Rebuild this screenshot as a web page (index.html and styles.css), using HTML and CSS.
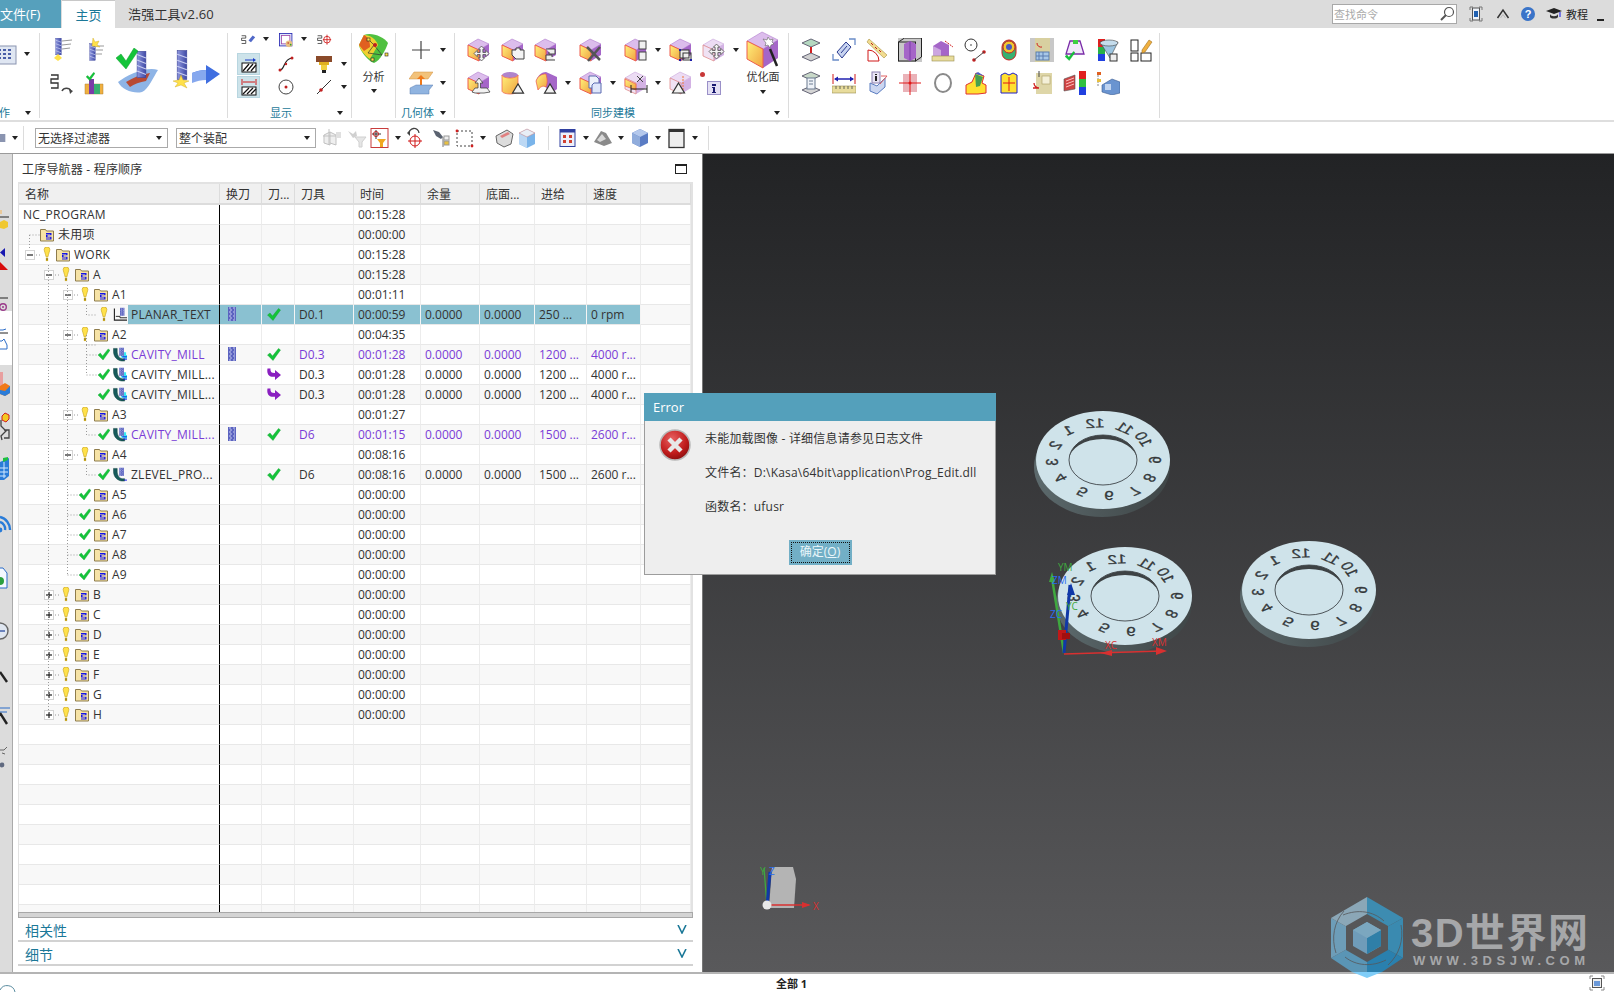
FILE: index.html
```html
<!DOCTYPE html>
<html lang="zh-CN">
<head>
<meta charset="utf-8">
<title>工序导航器</title>
<link rel="stylesheet" href="styles.css">
</head>
<body>
<svg class="defs" aria-hidden="true">
  <defs>
    <linearGradient id="gy" x1="0" y1="0" x2="1" y2="1"><stop offset="0" stop-color="#fff27a"/><stop offset="1" stop-color="#f0a040"/></linearGradient>
    <linearGradient id="gside" x1="0" y1="0" x2="1" y2="0"><stop offset="0" stop-color="#5c6a6d"/><stop offset=".5" stop-color="#4c5658"/><stop offset="1" stop-color="#3f4647"/></linearGradient>
    <linearGradient id="gmill" x1="0" y1="0" x2="1" y2="0"><stop offset="0" stop-color="#8d96dd"/><stop offset="1" stop-color="#3f4aa6"/></linearGradient>
    <linearGradient id="gview" x1="0" y1="0" x2="0" y2="1"><stop offset="0" stop-color="#222325"/><stop offset="1" stop-color="#59595b"/></linearGradient>
    <radialGradient id="gerr" cx=".4" cy=".3" r=".8"><stop offset="0" stop-color="#e86060"/><stop offset=".6" stop-color="#c01c1c"/><stop offset="1" stop-color="#7a0b0b"/></radialGradient>

    <symbol id="cube" viewBox="0 0 24 24">
      <path d="M1 7 11 1l11 5-10 6z" fill="#dcbdec" stroke="#b07ccc" stroke-width=".6"/>
      <path d="M12 12 22 6v11l-10 6z" fill="#a566c8"/>
      <path d="M1 7l11 5v11L1 18z" fill="url(#gy)" stroke="#ee5c4c" stroke-width="1"/>
    </symbol>
    <symbol id="cubel" viewBox="0 0 24 24">
      <path d="M1 7 11 1l11 5-10 6z" fill="#ecdcf4" stroke="#c9a6dc" stroke-width=".6"/>
      <path d="M12 12 22 6v11l-10 6z" fill="#d3b2e4"/>
      <path d="M1 7l11 5v11L1 18z" fill="#f0e2f4" stroke="#e08c8c" stroke-width=".8"/>
    </symbol>
    <symbol id="mv" viewBox="0 0 16 16">
      <path d="M8 1l3 3H9.300v3H12V5l3 3-3 3V9H9.300v3H11l-3 3-3-3h1.700V9H4v2L1 8l3-3v2h2.700V4H5z" fill="#f4f4f4" stroke="#555" stroke-width=".8"/>
    </symbol>
    <symbol id="tri" viewBox="0 0 14 14">
      <path d="M7 2l6 10H1z" fill="#f2f2f2" stroke="#333" stroke-width="1.200"/>
    </symbol>
    <symbol id="mill" viewBox="0 0 10 24">
      <rect x="1" y="0" width="8" height="24" fill="url(#gmill)" stroke="#3a4296" stroke-width=".5"/>
      <path d="M1 3l8 3M1 8l8 3M1 13l8 3M1 18l8 3" stroke="#c9cef2" stroke-width="1"/>
    </symbol>
    <symbol id="tool" viewBox="0 0 8 14">
      <rect width="8" height="14" fill="#5b63c0"/>
      <path d="M1 1h2M5 1h2M2 3h2M6 3h1M1 5h2M5 5h2M2 7h2M6 7h1M1 9h2M5 9h2M2 11h2M6 11h1M1 13h2M5 13h2" stroke="#c7ccf0" stroke-width="1"/>
    </symbol>
    <symbol id="chk" viewBox="0 0 13 13">
      <path d="M0 7l2.500-2 2.500 3 6-7.500L13 2 5.500 12.500z" fill="#14c43a" stroke="#0e9c2c" stroke-width=".4"/>
    </symbol>
    <symbol id="bulb" viewBox="0 0 8 16">
      <path d="M1 2.500a3 2.500 0 0 1 6 0c0 2-1.500 5-2 8H3c-.5-3-2-6-2-8z" fill="#ffe14a" stroke="#c9a51c" stroke-width=".7"/>
      <rect x="2.800" y="11.500" width="2.400" height="3.500" fill="#c9a92a"/>
      <path d="M3 13h2" stroke="#8e7a1c"/>
    </symbol>
    <symbol id="fold" viewBox="0 0 14 14">
      <path d="M.5 13.500V2h5l1 1.500h7v10z" fill="#f6e3a6" stroke="#8e7c4c"/>
      <path d="M6 5.500h5.500v2.200H7.500v1.500h4V12H6v-1h4.200V10H6V7h4.200V6.500H6z" fill="#1414e8"/>
    </symbol>
    <symbol id="opp" viewBox="0 0 15 15">
      <path d="M1.500 1v12.500H15" fill="none" stroke="#222" stroke-width="1.200"/>
      <path d="M3 9.500h4.500V11H15" fill="none" stroke="#222"/>
      <use href="#tool" x="7.500" y="0" width="5" height="9"/>
    </symbol>
    <symbol id="opc" viewBox="0 0 15 15">
      <path d="M8 5h6v3h1v4h-3v-1H9z" fill="#36e8f2"/>
      <path d="M.5 1v3c0 6 4 10 9 10.500h3v-2.500H10C6.500 11.500 4.500 8 4.500 4V1z" fill="#165a5a" stroke="#0e3c3c" stroke-width=".5"/>
      <path d="M10 10h5M11 12.500h4" stroke="#1414e8"/>
      <use href="#tool" x="6.500" y="0" width="5.500" height="9"/>
    </symbol>
    <symbol id="opz" viewBox="0 0 15 15">
      <path d="M.5 1v3c0 6 4 10 9 10.500h3v-2.500H10C6.500 11.500 4.500 8 4.500 4V1z" fill="#165a5a" stroke="#0e3c3c" stroke-width=".5"/>
      <path d="M12 13.500h3" stroke="#1414e8"/>
      <use href="#tool" x="6.500" y="0" width="5.500" height="9"/>
    </symbol>
    <symbol id="swap" viewBox="0 0 14 12">
      <path d="M.5 0h3c-.3 3 .7 4.500 4 4.500h.5V1.500L14 6.500 8 11.500V8.300H6C2 8.300-.5 5.500.5 0z" fill="#8a1fc0"/>
    </symbol>
    <symbol id="ss" viewBox="0 0 14 18">
      <path d="M1 1h7v4H1v4h7v5H1" fill="none" stroke="#333" stroke-width="1.300"/>
    </symbol>
    <symbol id="disk" viewBox="-72 -54 144 118" overflow="visible">
      <ellipse cx="-1" cy="7" rx="68" ry="50" fill="url(#gside)"/>
      <ellipse cx="0" cy="0" rx="67" ry="49" fill="#cfe3ea"/>
      <ellipse cx="0" cy="0" rx="34" ry="25" fill="#cfe3ea" stroke="#2c3033" stroke-width=".8"/>
      <path d="M-34 0a34 25 0 0 1 68 0a34 21 0 0 0-68 0z" fill="#3d4244"/>
      <g class="num">
        <text transform="translate(-8 -37) scale(1 .75) rotate(-3) scale(-1 1)">12</text>
        <text transform="translate(-35 -30) scale(1 .75) rotate(-30) scale(-1 1)">1</text>
        <text transform="translate(-48 -15) scale(1 .75) rotate(-60) scale(-1 1)">2</text>
        <text transform="translate(-51 2) scale(1 .75) rotate(-90) scale(-1 1)">3</text>
        <text transform="translate(-43 18) scale(1 .75) rotate(-120) scale(-1 1)">4</text>
        <text transform="translate(-21 32) scale(1 .75) rotate(-150) scale(-1 1)">5</text>
        <text transform="translate(6 36) scale(1 .75) rotate(180) scale(-1 1)">6</text>
        <text transform="translate(32 31) scale(1 .75) rotate(150) scale(-1 1)">7</text>
        <text transform="translate(47 18) scale(1 .75) rotate(120) scale(-1 1)">8</text>
        <text transform="translate(52 0) scale(1 .75) rotate(90) scale(-1 1)">9</text>
        <text transform="translate(41 -21) scale(1 .75) rotate(60) scale(-1 1)">10</text>
        <text transform="translate(22 -32) scale(1 .75) rotate(30) scale(-1 1)">11</text>
      </g>
    </symbol>
  </defs>
</svg>

<div class="app">
  <header class="titlebar">
    <div class="tab-file">文件(F)</div>
    <div class="tab-home">主页</div>
    <div class="tab-tool">浩强工具v2.60</div>
    <div class="title-right">
      <div class="search"><span>查找命令</span>
        <svg class="i16" viewBox="0 0 16 16"><circle cx="10" cy="6" r="4.500" fill="#fff" stroke="#555" stroke-width="1.200"/><path d="M7 9l-5 5" stroke="#555" stroke-width="2"/></svg>
      </div>
      <svg class="i16 ml-a" viewBox="0 0 16 16"><path d="M2 4V1h3M11 1h3v3M14 12v3h-3M5 15H2v-3" fill="none" stroke="#777"/><rect x="4.500" y="2" width="7" height="12" fill="#eef2f8" stroke="#555"/><rect x="6" y="5" width="4" height="6" fill="#1f5fb0"/></svg>
      <svg class="i16 ml-b" viewBox="0 0 16 16"><path d="M2.500 12 8 4l5.500 8" fill="none" stroke="#333" stroke-width="1.500"/><path d="M5.500 12 8 8.500l2.500 3.500" fill="none" stroke="#bbb"/></svg>
      <svg class="i16 ml-c" viewBox="0 0 16 16"><circle cx="8" cy="8" r="7" fill="#3a74c8"/><text x="8" y="12" class="help">?</text></svg>
      <svg class="i16 ml-d" viewBox="0 0 16 16"><path d="M0 5l8-3 8 3-8 3z" fill="#222"/><path d="M4 8c1 3 7 3 8 0v3c-1 2-7 2-8 0z" fill="#333"/><path d="M14 6v5" stroke="#1414e8"/></svg>
      <span class="tut">教程</span>
      <span class="minus"></span>
    </div>
  </header>

  <section class="ribbon">
    <div class="grp g0">
      <div class="g-body g0-body">
        <svg class="i24 cut" viewBox="0 0 24 24"><rect x="0" y="4" width="22" height="18" fill="#dfe6f2" stroke="#8a94b0"/><path d="M4 8h14M4 12h14M4 16h14" stroke="#4a5fa8" stroke-width="2" stroke-dasharray="3 2"/></svg>
        <i class="caret"></i>
      </div>
      <div class="g-foot"><span class="flabel g0-l">作</span><i class="caret"></i></div>
    </div>

    <div class="grp g1">
      <div class="g1-body">
        <svg class="i24" viewBox="0 0 24 24"><use href="#mill" x="6" y="0" width="7" height="17"/><path d="M13 3l10-1M13 7l9-1M13 11l8-1" stroke="#999"/><path d="M5 20l4-4 4 4-4 3z" fill="#ffe14a"/></svg>
        <svg class="i24" viewBox="0 0 24 24"><use href="#mill" x="8" y="5" width="7" height="18"/><path d="M15 8h8M15 12h7M15 16h6" stroke="#999"/><path d="M12 0l2 4 4-1-2 4 3 2-8-1z" fill="#ffe14a" stroke="#c9a51c" stroke-width=".4"/></svg>
        <svg class="big1" viewBox="0 0 44 46"><path d="M2 34c10-8 30-16 40-12-4 6-10 20-16 22C18 46 6 42 2 34z" fill="#8eb4e6"/><path d="M10 34c8-5 16-8 24-9l-4 8c-6 1-12 3-16 6z" fill="#b84a34"/><use href="#mill" x="20" y="3" width="11" height="27"/><path d="M0 10l5-4 5 7L18 0l4 3-12 18z" fill="#14c43a" stroke="#0e9c2c" stroke-width=".5"/></svg>
        <svg class="big2" viewBox="0 0 48 44"><use href="#mill" x="4" y="0" width="12" height="32"/><path d="M3 38l3-4-5-2 6-1 2-5 2 5 6 1-5 2 3 5-6-3z" fill="#ffe14a" stroke="#c9a51c" stroke-width=".4"/><path d="M20 24c5-2 9-3 14-3v-5l14 9-14 10v-5c-5 0-9 1-14 3z" fill="#3f6ee0"/><path d="M20 24c5-2 9-3 14-3v10c-5 0-9 1-14 3z" fill="#86a8ee"/></svg>
        <svg class="i24" viewBox="0 0 24 24"><use href="#ss" x="1" y="2" width="14" height="20"/><path d="M13 20a5 5 0 0 1 9 0" fill="none" stroke="#444" stroke-width="1.500"/><path d="M20 18l4 2-3 3z" fill="#444"/></svg>
        <svg class="i24" viewBox="0 0 24 24"><path d="M4 13h18v10H4z" fill="#f0b040" stroke="#b08030" stroke-width=".5"/><path d="M8 8h5v15H8z" fill="#7a3ca8"/><path d="M13 13h6v10h-6z" fill="#38b070"/><use href="#chk" x="5" y="1" width="9" height="9"/></svg>
      </div>
    </div>

    <div class="grp g2">
      <div class="g2-body">
        <svg class="i15" viewBox="0 0 18 18"><use href="#ss" x="0" y="2" width="10" height="14"/><path d="M9 9l5-6 3 2-5 6z" fill="#5068c8"/></svg><i class="caret"></i>
        <svg class="i15" viewBox="0 0 18 18"><rect x=".5" y=".5" width="15" height="15" fill="#dfe6fa" stroke="#2424b0"/><rect x="3" y="3" width="10" height="10" fill="#fff" stroke="#a04ca8"/><circle cx="12" cy="13" r="4" fill="#e8c080"/><circle cx="11" cy="12" r="1" fill="#c03030"/><circle cx="14" cy="14" r="1" fill="#30a030"/></svg><i class="caret"></i>
        <svg class="i15" viewBox="0 0 18 18"><use href="#ss" x="0" y="2" width="10" height="14"/><circle cx="12" cy="8" r="4" fill="none" stroke="#d01818"/><path d="M12 2v12M7 8h10" stroke="#d01818"/></svg><span></span>
        <div class="hl"><svg class="i18" viewBox="0 0 18 18"><rect x="2" y="8" width="14" height="9" fill="#fff" stroke="#111"/><path d="M3 16l6-7M7 16l6-7M11 16l5-6" stroke="#111" stroke-width="1.300"/><path d="M5 5h8" stroke="#1c3cc8"/><path d="M13 3l3 2-3 2z" fill="#1c3cc8"/></svg></div><span></span>
        <svg class="i18" viewBox="0 0 18 18"><path d="M3 15C8 15 6 4 15 3" fill="none" stroke="#222" stroke-width="1.200"/><circle cx="3" cy="15" r="1.500" fill="#c02020"/><circle cx="15" cy="3" r="1.500" fill="#c02020"/><circle cx="9" cy="9" r="1.200" fill="#c02020"/></svg><span></span>
        <svg class="i18" viewBox="0 0 18 18"><path d="M1 1h16v6H1z" fill="#8a4a2a"/><path d="M4 7h10v3H4z" fill="#e0b020"/><path d="M6 10h6v5H6z" fill="#f0d040"/><path d="M7 15h4v3H7z" fill="#222"/></svg><i class="caret"></i>
        <div class="hl"><svg class="i18" viewBox="0 0 18 18"><rect x="2" y="9" width="14" height="8" fill="#fff" stroke="#111"/><path d="M3 16l6-6M7 16l6-6M11 16l5-5" stroke="#111" stroke-width="1.300"/><path d="M2 1v6M16 1v6M3 4h12" stroke="#d01818"/></svg></div><span></span>
        <svg class="i18" viewBox="0 0 18 18"><circle cx="9" cy="9" r="7" fill="#fff" stroke="#444"/><circle cx="9" cy="9" r="1.500" fill="#c02020"/></svg><span></span>
        <svg class="i18" viewBox="0 0 18 18"><path d="M2 16 16 2" stroke="#333"/><circle cx="6" cy="12" r="1.800" fill="#c02020"/></svg><i class="caret"></i>
      </div>
      <div class="g-foot g2-foot"><span class="flabel">显示</span><i class="caret"></i></div>
    </div>

    <div class="grp g3">
      <svg class="big3" viewBox="0 0 32 30"><path d="M6 2c8-3 20 2 24 8-2 6-8 18-14 20C10 28 2 18 1 12z" fill="#50c040"/><path d="M6 2c6 0 12 4 14 10l-8 14c-6-4-10-10-11-14z" fill="#f0d030"/><path d="M6 2c4 2 6 6 6 12l-6 4-5-6z" fill="#e06020"/><path d="M10 6l6 6 8 10M16 12l-6 8 14 2" fill="none" stroke="#333" stroke-width=".7"/><rect x="9" y="5" width="3" height="3" fill="#ffe14a" stroke="#222" stroke-width=".6"/><rect x="27" y="20" width="3" height="3" fill="#ffe14a" stroke="#222" stroke-width=".6"/><rect x="13" y="25" width="3" height="3" fill="#ffe14a" stroke="#222" stroke-width=".6"/><circle cx="17" cy="12" r="2" fill="#c02020"/></svg>
      <span class="blabel">分析</span>
      <i class="caret"></i>
    </div>

    <div class="grp g4">
      <div class="g4-body">
        <svg class="i24" viewBox="0 0 24 24"><path d="M12 3v18M3 12h18" stroke="#444" stroke-width="1.200"/></svg><i class="caret"></i>
        <svg class="i24" viewBox="0 0 24 24"><path d="M5 1h19l-5 7H0z" fill="#f2c27a" stroke="#d09040" stroke-width=".5"/><path d="M11 17V8H8l4-4 4 4h-3v9z" fill="#f07818"/><path d="M1 17l6-3h17l-4 5v4H1z" fill="#90b4e0" stroke="#5a7cb0" stroke-width=".5"/></svg><i class="caret"></i>
      </div>
      <div class="g-foot"><span class="flabel">几何体</span><i class="caret"></i></div>
    </div>

    <div class="grp g5">
      <div class="g5-body">
        <svg class="i24" viewBox="0 0 24 24"><use href="#cube"/><use href="#mv" x="6" y="7" width="17" height="17"/></svg>
        <svg class="i24" viewBox="0 0 24 24"><use href="#cube"/><path d="M11 12h4v-2h4v2h4v9h-8l-4-4z" fill="#f4f4f4" stroke="#444"/></svg>
        <svg class="i24" viewBox="0 0 24 24"><use href="#cube"/><path d="M12 11h9v5h-6v-2M21 22h-9v-5h6v2" fill="#eee" stroke="#444"/></svg>
        <span></span>
        <svg class="i24" viewBox="0 0 24 24"><use href="#cube"/><path d="M8 9l13 13M21 9 9 23" stroke="#555" stroke-width="2.500"/></svg>
        <span></span>
        <svg class="i24" viewBox="0 0 24 24"><use href="#cube"/><rect x="15" y="3" width="7" height="8" fill="#f0f0f0" stroke="#444"/><rect x="15" y="14" width="7" height="8" fill="#f0f0f0" stroke="#444"/></svg>
        <i class="caret"></i>
        <svg class="i24" viewBox="0 0 24 24"><use href="#cube"/><rect x="11" y="12" width="9" height="8" fill="#eee" stroke="#333"/><rect x="14" y="15" width="8" height="7" fill="none" stroke="#333"/><path d="M10 11h2v2h-2zM21 21h2v2h-2zM10 21h2v2h-2z" fill="#1c1ca8"/></svg>
        <svg class="i24" viewBox="0 0 24 24"><use href="#cubel"/><use href="#mv" x="6" y="5" width="17" height="17"/></svg>
        <i class="caret"></i>
        <svg class="big5" viewBox="0 0 34 38"><path d="M1 10 16 1l16 8-15 9z" fill="#dcbdec" stroke="#b07ccc" stroke-width=".6"/><path d="M17 18 32 9v18l-15 10z" fill="#a566c8"/><path d="M1 10l16 8v19L1 28z" fill="url(#gy)" stroke="#ee5c4c"/><path d="M17 8l4 1 1-3 2 3 3-1-1 3 2 2-3 1-1 3-2-3-3 1 1-3z" fill="#fff" stroke="#666" stroke-width=".6"/><path d="M24 18l7 17" stroke="#222" stroke-width="2.500"/></svg>

        <svg class="i24" viewBox="0 0 24 24"><use href="#cube"/><path d="M12 7l4 5h-2.500v5H20l3 4-6 1H8l-3-1 3-4h3v-5H8z" fill="#f2f2f2" stroke="#444" stroke-width=".8"/></svg>
        <svg class="i24" viewBox="0 0 24 24"><ellipse cx="9" cy="4" rx="8" ry="3" fill="#b084cc"/><path d="M1 4v16c0 2 5 3 8 3s8-1 8-3V4c0 2-5 3-8 3S1 6 1 4z" fill="url(#gy)" stroke="#ee5c4c" stroke-width=".7"/><use href="#tri" x="10" y="11" width="14" height="13"/></svg>
        <svg class="i24" viewBox="0 0 24 24"><path d="M2 10C4 4 8 1 12 1l11 5v12l-5 4-5-4C11 14 7 14 5 17z" fill="#a566c8"/><path d="M2 10c2-5 5-7 10-7 1 4 2 8 0 13-3-2-6 0-8 3z" fill="url(#gy)" stroke="#ee5c4c" stroke-width=".7"/><use href="#tri" x="9" y="11" width="14" height="13"/></svg>
        <i class="caret"></i>
        <svg class="i24" viewBox="0 0 24 24"><use href="#cube"/><path d="M10 5h7l3 3v9h-10z" fill="#eef2fa" stroke="#5a6ab0"/><path d="M15 12h7v10h-9v-8z" fill="#dfe6fa" stroke="#5a6ab0"/></svg>
        <i class="caret"></i>
        <svg class="i24" viewBox="0 0 24 24"><use href="#cubel"/><path d="M1 8l11 5v6L1 15z" fill="url(#gy)" stroke="#ee5c4c" stroke-width=".7"/><path d="M13 5l6 6M19 5l-6 6" stroke="#444"/><path d="M7 14v8M23 14v8M7 18h16" stroke="#222"/></svg>
        <i class="caret"></i>
        <svg class="i24" viewBox="0 0 24 24"><use href="#cubel"/><path d="M14 5v15" stroke="#f07838" stroke-dasharray="2 1"/><use href="#tri" x="2" y="10" width="15" height="14"/></svg>
        <div class="dotinfo"><i class="rdot"></i><svg class="i14" viewBox="0 0 14 14"><rect x=".5" y=".5" width="13" height="13" fill="#e4e0f4" stroke="#9a90c8"/><path d="M5 3h4v2H5zM5 6h3v5h1v1H5v-1h1V7H5z" fill="#1a1a70"/></svg></div>
        <div class="stack"><span class="blabel">优化面</span><i class="caret"></i></div>
      </div>
      <div class="g-foot g5-foot"><span class="flabel">同步建模</span><i class="caret"></i></div>
    </div>

    <div class="grp g6">
      <div class="g6-body">
        <svg class="i24" viewBox="0 0 24 24"><path d="M3 5l9-4 9 4-9 4z" fill="#b4d8c0" stroke="#667"/><path d="M3 19l9-4 9 4-9 4z" fill="#d0d0d0" stroke="#667"/><path d="M12 9v6" stroke="#d02020" stroke-width="2"/></svg>
        <svg class="i24" viewBox="0 0 24 24"><path d="M5 14 14 4l5 5-9 11z" fill="#c8d4f0" stroke="#2c3c90"/><path d="M9 15 15 8" stroke="#2c3c90"/><path d="M1 16v6h6M17 1h6v6" fill="none" stroke="#6a8cc8" stroke-width="1.300"/></svg>
        <svg class="i24" viewBox="0 0 24 24"><path d="M3 23V12a11 11 0 0 1 11 11z" fill="none" stroke="#d01818"/><path d="M4 1 22 17l-3 3L2 4z" fill="#f2dc90" stroke="#a89040" stroke-width=".6"/><path d="M6 5l2 2M10 9l2 2M14 12l2 2" stroke="#c02020"/></svg>
        <svg class="i24 shade" viewBox="0 0 24 24"><rect x=".5" y="4" width="17" height="19" fill="none" stroke="#222"/><path d="M.5 4l6-4h17v19l-6 4" fill="none" stroke="#222"/><path d="M6 6l6-3 6 3v14l-6 3-6-3z" fill="#a566c8"/><path d="M12 3v20" stroke="#7a3ca8"/></svg>
        <svg class="i24" viewBox="0 0 24 24"><path d="M2 8l8-5 8 4v11H2z" fill="#a566c8"/><path d="M2 8l8 4v6H2z" fill="#cca6e0"/><path d="M14 3l8 6" stroke="#d01818" stroke-dasharray="2 1"/><rect x="1" y="18" width="22" height="5" fill="#e8dc9c" stroke="#988c50" stroke-width=".6"/></svg>
        <svg class="i24" viewBox="0 0 24 24"><circle cx="7" cy="7" r="6" fill="#fff" stroke="#333"/><circle cx="7" cy="7" r=".8" fill="#333"/><circle cx="10" cy="22" r="1.800" fill="#c02020"/><circle cx="20" cy="14" r="1.800" fill="#c02020"/><path d="M10 22l10-8" stroke="#444"/></svg>
        <svg class="i24" viewBox="0 0 24 24"><rect x="5" y="2" width="14" height="20" rx="7" fill="#38b070" stroke="#d02020"/><circle cx="12" cy="9" r="6" fill="#f0c830" stroke="#d02020"/><circle cx="12" cy="9" r="3" fill="#4a5ac0"/></svg>
        <svg class="i24 shade" viewBox="0 0 24 24"><rect x="5" y="0" width="15" height="24" fill="#d8d0a0"/><rect x="6" y="14" width="13" height="8" fill="#a8c8e8" stroke="#5a7cb0"/><path d="M9 14v8M13 14v8M6 18h13" stroke="#5a7cb0"/><path d="M7 5a4 4 0 0 0 5 4" stroke="#d02020" fill="none"/></svg>
        <svg class="i24" viewBox="0 0 24 24"><path d="M7 3h10l4 13H3z" fill="#f2e8fa" stroke="#7a2ca8" stroke-width="1.300"/><rect x="10" y="2" width="5" height="4" fill="#3cd040"/><use href="#chk" x="2" y="13" width="10" height="10"/></svg>
        <svg class="i24" viewBox="0 0 24 24"><rect x="2" y="1" width="7" height="22" fill="#e02020"/><rect x="2" y="9" width="7" height="7" fill="#28b048"/><rect x="2" y="16" width="7" height="7" fill="#2040e0"/><path d="M4 4h18l-8 16z" fill="#9cc4e0" stroke="#444" stroke-width=".6"/><ellipse cx="13" cy="5" rx="9" ry="3" fill="#c4dcec" stroke="#444" stroke-width=".6"/><rect x="14" y="16" width="7" height="7" fill="#eee" stroke="#333"/></svg>
        <svg class="i24" viewBox="0 0 24 24"><rect x="2" y="2" width="7" height="11" fill="#fff" stroke="#222"/><rect x="2" y="15" width="7" height="8" fill="#fff" stroke="#222"/><rect x="12" y="15" width="10" height="8" fill="#fff" stroke="#222"/><path d="M13 12 20 2l3 2-7 10-3 1z" fill="#f0b040" stroke="#a07020" stroke-width=".6"/></svg>

        <svg class="i24" viewBox="0 0 24 24"><path d="M3 5l9-4 9 4-9 4z" fill="#c8d8c8" stroke="#667"/><path d="M3 19l9-4 9 4-9 4z" fill="#d4d4d4" stroke="#667"/><rect x="8" y="7" width="8" height="11" fill="#eef2f8" stroke="#6a7a90"/><path d="M10 10h4M10 13h4" stroke="#6a7a90"/></svg>
        <svg class="i24" viewBox="0 0 24 24"><path d="M1 3v10M23 3v10" stroke="#d01818"/><path d="M3 8h18" stroke="#2020b0" stroke-width="1.500"/><path d="M2 8l4-2.500v5zM22 8l-4-2.500v5z" fill="#2020b0"/><rect x="0" y="15" width="24" height="7" fill="#e8dc9c" stroke="#988c50" stroke-width=".6"/><path d="M4 15v3M8 15v3M12 15v3M16 15v3M20 15v3" stroke="#665"/></svg>
        <svg class="i24" viewBox="0 0 24 24"><path d="M5 12l7 3 8-8v9l-8 7-7-3z" fill="#cbd6f0" stroke="#5a7cc0"/><rect x="7" y="1" width="8" height="11" fill="#e8e4f4" stroke="#8a80b0"/><path d="M10 3h2v1h-2zM10 5h2v5h-2z" fill="#222"/><path d="M16 5h6l-7 8" fill="none" stroke="#e06060"/></svg>
        <svg class="i24" viewBox="0 0 24 24"><rect x="5" y="3" width="14" height="18" fill="#eab2b8"/><path d="M12 0v24M1 12h22" stroke="#e01818"/><circle cx="12" cy="12" r="1.500" fill="#e01818"/></svg>
        <svg class="i24" viewBox="0 0 24 24"><ellipse cx="12" cy="12" rx="8" ry="9" fill="none" stroke="#8a8a8a" stroke-width="2"/></svg>
        <svg class="i24" viewBox="0 0 24 24"><path d="M2 14l6-3 4-9 8 3-2 7 4 2v8l-8 1H2z" fill="#ffe030" stroke="#e03030"/><path d="M11 3l8 3-3 9-4 1z" fill="#48a050"/><path d="M11 3l3-2 6 4" fill="#4a60c8"/></svg>
        <svg class="i24" viewBox="0 0 24 24"><path d="M4 4l4-2 4 2 4-2 4 2v18H4z" fill="#ffe030" stroke="#2020c8"/><path d="M12 6v14M6 12h12" stroke="#e01818"/></svg>
        <svg class="i24" viewBox="0 0 24 24"><rect x="6" y="2" width="16" height="21" fill="#ded6a8"/><rect x="12" y="5" width="8" height="8" fill="#f4f0d8" stroke="#a89c60" stroke-width=".6"/><path d="M9 0v6" stroke="#444"/><path d="M4 12a5 5 0 0 0 5 5H3" fill="none" stroke="#d02020" stroke-width="1.300"/></svg>
        <svg class="i24" viewBox="0 0 24 24"><path d="M1 8l11-4v14L1 20z" fill="#d04444" stroke="#555" stroke-width=".6"/><path d="M3 10l8-3M3 13l8-3M3 16l8-3" stroke="#ffc0c0"/><rect x="16" y="0" width="7" height="8" fill="#e02020"/><rect x="16" y="8" width="7" height="8" fill="#30c040"/><rect x="16" y="16" width="7" height="8" fill="#2040e0"/></svg>
        <svg class="i24" viewBox="0 0 24 24"><path d="M2 1v14" stroke="#888" stroke-dasharray="2 1"/><rect x="1" y="1" width="4" height="3" fill="#e06020"/><rect x="1" y="8" width="4" height="3" fill="#e8c040"/><path d="M6 14l10-6 8 3v11l-8 2-10-3z" fill="#6a94d0" stroke="#3a5a90" stroke-width=".6"/><rect x="9" y="13" width="6" height="6" fill="#c0d4f0"/></svg>
      </div>
    </div>
  </section>

  <section class="toolbar">
    <svg class="ti cut2" viewBox="0 0 12 14"><rect x="-6" y="1" width="14" height="12" fill="#8a94b0"/></svg><i class="caret m4"></i><b class="sep m5"></b>
    <div class="sel s1 m11"><span>无选择过滤器</span><i class="caret"></i></div>
    <div class="sel s2"><span>整个装配</span><i class="caret"></i></div>
    <svg class="ti dim m5" viewBox="0 0 22 22"><path d="M3 8l6-3v13l-6-2zM9 5l6 3v10l-6-2" fill="#eee" stroke="#bbb"/><path d="M15 5h5v6h-5z" fill="#ddd"/><path d="M8 2v16M2 9h13" stroke="#bbb"/></svg>
    <svg class="ti dim m3" viewBox="0 0 22 22"><path d="M2 4l5 3 3-3 1 5-4 2z" fill="#ccc"/><path d="M9 10h11l-4 5v5h-3v-5z" fill="#e4e4e4" stroke="#ccc"/></svg>
    <svg class="ti m1" viewBox="0 0 22 22"><rect x="2" y="1.500" width="17" height="19" fill="#fff" stroke="#c83c3c"/><path d="M7 3v9M3 7h9" stroke="#333"/><circle cx="7" cy="7" r="2.500" fill="none" stroke="#c02020"/><path d="M8 12h9l-3 4v4h-3v-4z" fill="#f0a820"/></svg>
    <i class="caret c14"></i>
    <svg class="ti" viewBox="0 0 22 22"><path d="M5 7a5 5 0 0 1 10-1" fill="none" stroke="#444" stroke-width="1.300"/><path d="M3 6l3-3v6z" fill="#444"/><circle cx="11" cy="14" r="5" fill="none" stroke="#d01818"/><path d="M11 7v14M4 14h14" stroke="#d01818"/></svg>
    <svg class="ti m4" viewBox="0 0 22 22"><path d="M3 3l6 2 4 5-2 2-5-3z" fill="#5a6270"/><path d="M13 10v10" stroke="#777"/><rect x="14" y="9" width="5" height="4" fill="#eee" stroke="#999"/><rect x="14" y="14" width="5" height="4" fill="#e8c040" stroke="#999"/></svg>
    <svg class="ti m2" viewBox="0 0 22 22"><rect x="3" y="4" width="15" height="15" fill="none" stroke="#444" stroke-dasharray="2 2"/><circle cx="3" cy="4" r="1.400" fill="#d02020"/><circle cx="18" cy="19" r="1.400" fill="#d02020"/></svg>
    <i class="caret c14"></i>
    <svg class="ti m4" viewBox="0 0 22 22"><path d="M3 9l11-6 6 4-2 10-7 3-7-4z" fill="#dcdcdc" stroke="#666"/><path d="M7 9l8-4 2 2-8 4z" fill="#e08080"/></svg>
    <svg class="ti m1" viewBox="0 0 22 22"><path d="M3 6l8-4 8 4v11l-8 4-8-4z" fill="#7ab4ea"/><path d="M3 6l8 4v11l-8-4z" fill="#bcd8f4"/><path d="M3 6l8-4 8 4-8 4z" fill="#e8eef6" stroke="#d08080" stroke-width=".5"/></svg>
    <b class="sep m10"></b>
    <svg class="ti m8" viewBox="0 0 22 22"><rect x="3" y="2.500" width="15" height="17" fill="#eef0fa" stroke="#3040a0"/><rect x="3" y="2.500" width="15" height="3" fill="#3040a0"/><path d="M6 8h3v3H6zM12 8h3v3h-3zM6 13h3v3H6zM12 13h3v3h-3z" fill="#d04030"/></svg>
    <i class="caret c14"></i>
    <svg class="ti" viewBox="0 0 22 22"><path d="M2 15l7-11 5 2 6 10-8 3z" fill="#8a8a8a"/><path d="M5 13l5-6 4 5-6 3z" fill="#d8d8d8"/></svg>
    <i class="caret c14"></i>
    <svg class="ti m2" viewBox="0 0 22 22"><path d="M3 6l8-4 8 4v10l-8 4-8-4z" fill="#5a7cc4"/><path d="M3 6l8 4 8-4-8-4z" fill="#b4c8ec"/><path d="M3 6l8 4v10l-8-4z" fill="#90acdc"/></svg>
    <i class="caret c14 m1"></i>
    <svg class="ti m2" viewBox="0 0 22 22"><rect x="3" y="2.500" width="15" height="18" fill="#eeeeee" stroke="#333" stroke-width="1.300"/><path d="M3 4h15" stroke="#333" stroke-width="2"/></svg>
    <i class="caret c14"></i>
    <b class="sep m7"></b>
  </section>

  <main class="main">
    <aside class="strip">
      <svg class="strip-art" viewBox="0 154 12 818">
        <rect x="0" y="311" width="12" height="54" fill="#fff"/>
        <path d="M0 217h9" stroke="#222"/>
        <path d="M0 210h2v4H0z" fill="#e8c89a"/>
        <path d="M0 222l4-2 4 2v5l-4 2-4-1z" fill="#f0c830"/>
        <path d="M5 248v9l-5-4.500z" fill="#1818b0"/>
        <path d="M0 262l8 8H0z" fill="#d80c0c"/>
        <path d="M0 298h8" stroke="#222"/>
        <circle cx="3" cy="307" r="3.300" fill="none" stroke="#9a3a8a" stroke-width="1.400"/>
        <circle cx="3" cy="307" r="1" fill="#9a3a8a"/>
        <path d="M0 330h3l3-1" stroke="#2a6cc8" fill="none"/>
        <path d="M0 333h8" stroke="#222"/>
        <path d="M0 341h2l2-2 3 6v4H0" fill="none" stroke="#2a6cc8"/>
        <path d="M0 372h3v14H0z" fill="#e8a0a0"/>
        <path d="M0 386l5-3 5 3v7l-5 3-5-2z" fill="#f07818"/>
        <path d="M0 390l5 1 5-5v7l-5 3-5-2z" fill="#2a7cd8"/>
        <path d="M2 416l3-3 4 2v4l-3 3-4-2z" fill="#f4c820" stroke="#d02020"/>
        <path d="M1 420v6l5 5-5 5 1 4M4 430h5v8H4" fill="none" stroke="#444" stroke-width="1.300"/>
        <path d="M0 462l9-4v18l-5 4H0z" fill="#2a7cd8"/><path d="M0 468h8M0 472h8M0 476h6M4 462v16" stroke="#d0e8ff"/><path d="M3 458l5-1v3l-5 2z" fill="#1fc040"/>
        <path d="M0 517a13 13 0 0 1 10 13M0 522a7 7 0 0 1 5 8" fill="none" stroke="#2a7cd8" stroke-width="2.400"/><circle cx="0" cy="530" r="2.400" fill="#2a7cd8"/>
        <path d="M0 568h3l4 5v15H0" fill="#f4f8ff" stroke="#2a6cc8"/><circle cx="0" cy="581" r="4" fill="#2ca040"/>
        <circle cx="0" cy="631" r="8" fill="#dfe6f0" stroke="#666" stroke-width="1.400"/><path d="M0 631h5" stroke="#2a4ca0" stroke-width="1.300"/>
        <path d="M0 672l7 10" stroke="#222" stroke-width="2.400"/>
        <path d="M0 708h10M0 712h7" stroke="#2a6cc8"/><path d="M0 713l7 11" stroke="#222" stroke-width="2.400"/>
        <path d="M0 750h4l3-3M2 753l3 1" stroke="#666" fill="none"/><circle cx="2" cy="765" r="2.400" fill="#606a80"/>
      </svg>
    </aside>

    <div class="panel">
      <div class="panel-head"><span>工序导航器 - 程序顺序</span><i class="maxbox"></i></div>
      <div class="table">
        <div class="row head"><span>名称</span><span>换刀</span><span>刀...</span><span>刀具</span><span>时间</span><span>余量</span><span>底面...</span><span>进给</span><span>速度</span><span></span></div>
        <div class="rows">
          <div class="row"><span class="n d0">NC_PROGRAM</span><span></span><span></span><span></span><span>00:15:28</span><span></span><span></span><span></span><span></span><span></span></div>
          <div class="row"><span class="n d1"><i class="bx no"></i><svg class="fold fold-n"><use href="#fold"/></svg>未用项</span><span></span><span></span><span></span><span>00:00:00</span><span></span><span></span><span></span><span></span><span></span></div>
          <div class="row"><span class="n d1"><i class="bx"></i><svg class="st"><use href="#bulb"/></svg><svg class="fold"><use href="#fold"/></svg>WORK</span><span></span><span></span><span></span><span>00:15:28</span><span></span><span></span><span></span><span></span><span></span></div>
          <div class="row"><span class="n d2"><i class="bx"></i><svg class="st"><use href="#bulb"/></svg><svg class="fold"><use href="#fold"/></svg>A</span><span></span><span></span><span></span><span>00:15:28</span><span></span><span></span><span></span><span></span><span></span></div>
          <div class="row"><span class="n d3"><i class="bx"></i><svg class="st"><use href="#bulb"/></svg><svg class="fold"><use href="#fold"/></svg>A1</span><span></span><span></span><span></span><span>00:01:11</span><span></span><span></span><span></span><span></span><span></span></div>
          <div class="row selrow"><span class="n d4"><i class="bx no"></i><svg class="st"><use href="#bulb"/></svg><svg class="fold"><use href="#opp"/></svg><em class="sel-name">PLANAR_TEXT</em></span><span class="on"><svg class="tc"><use href="#tool"/></svg></span><span class="on"><svg class="ck"><use href="#chk"/></svg></span><span class="on">D0.1</span><span class="on">00:00:59</span><span class="on">0.0000</span><span class="on">0.0000</span><span class="on">250 ...</span><span class="on">0 rpm</span><span></span></div>
          <div class="row"><span class="n d3"><i class="bx"></i><svg class="st"><use href="#bulb"/></svg><svg class="fold"><use href="#fold"/></svg>A2</span><span></span><span></span><span></span><span>00:04:35</span><span></span><span></span><span></span><span></span><span></span></div>
          <div class="row pur"><span class="n d4"><i class="bx no"></i><svg class="st"><use href="#chk"/></svg><svg class="fold"><use href="#opc"/></svg>CAVITY_MILL</span><span><svg class="tc"><use href="#tool"/></svg></span><span><svg class="ck"><use href="#chk"/></svg></span><span>D0.3</span><span>00:01:28</span><span>0.0000</span><span>0.0000</span><span>1200 ...</span><span>4000 r...</span><span></span></div>
          <div class="row"><span class="n d4"><i class="bx no"></i><svg class="st"><use href="#chk"/></svg><svg class="fold"><use href="#opc"/></svg>CAVITY_MILL...</span><span></span><span><svg class="ck"><use href="#swap"/></svg></span><span>D0.3</span><span>00:01:28</span><span>0.0000</span><span>0.0000</span><span>1200 ...</span><span>4000 r...</span><span></span></div>
          <div class="row"><span class="n d4"><i class="bx no"></i><svg class="st"><use href="#chk"/></svg><svg class="fold"><use href="#opc"/></svg>CAVITY_MILL...</span><span></span><span><svg class="ck"><use href="#swap"/></svg></span><span>D0.3</span><span>00:01:28</span><span>0.0000</span><span>0.0000</span><span>1200 ...</span><span>4000 r...</span><span></span></div>
          <div class="row"><span class="n d3"><i class="bx"></i><svg class="st"><use href="#bulb"/></svg><svg class="fold"><use href="#fold"/></svg>A3</span><span></span><span></span><span></span><span>00:01:27</span><span></span><span></span><span></span><span></span><span></span></div>
          <div class="row pur"><span class="n d4"><i class="bx no"></i><svg class="st"><use href="#chk"/></svg><svg class="fold"><use href="#opc"/></svg>CAVITY_MILL...</span><span><svg class="tc"><use href="#tool"/></svg></span><span><svg class="ck"><use href="#chk"/></svg></span><span>D6</span><span>00:01:15</span><span>0.0000</span><span>0.0000</span><span>1500 ...</span><span>2600 r...</span><span></span></div>
          <div class="row"><span class="n d3"><i class="bx"></i><svg class="st"><use href="#bulb"/></svg><svg class="fold"><use href="#fold"/></svg>A4</span><span></span><span></span><span></span><span>00:08:16</span><span></span><span></span><span></span><span></span><span></span></div>
          <div class="row"><span class="n d4"><i class="bx no"></i><svg class="st"><use href="#chk"/></svg><svg class="fold"><use href="#opz"/></svg>ZLEVEL_PRO...</span><span></span><span><svg class="ck"><use href="#chk"/></svg></span><span>D6</span><span>00:08:16</span><span>0.0000</span><span>0.0000</span><span>1500 ...</span><span>2600 r...</span><span></span></div>
          <div class="row"><span class="n d3"><i class="bx no"></i><svg class="st"><use href="#chk"/></svg><svg class="fold"><use href="#fold"/></svg>A5</span><span></span><span></span><span></span><span>00:00:00</span><span></span><span></span><span></span><span></span><span></span></div>
          <div class="row"><span class="n d3"><i class="bx no"></i><svg class="st"><use href="#chk"/></svg><svg class="fold"><use href="#fold"/></svg>A6</span><span></span><span></span><span></span><span>00:00:00</span><span></span><span></span><span></span><span></span><span></span></div>
          <div class="row"><span class="n d3"><i class="bx no"></i><svg class="st"><use href="#chk"/></svg><svg class="fold"><use href="#fold"/></svg>A7</span><span></span><span></span><span></span><span>00:00:00</span><span></span><span></span><span></span><span></span><span></span></div>
          <div class="row"><span class="n d3"><i class="bx no"></i><svg class="st"><use href="#chk"/></svg><svg class="fold"><use href="#fold"/></svg>A8</span><span></span><span></span><span></span><span>00:00:00</span><span></span><span></span><span></span><span></span><span></span></div>
          <div class="row"><span class="n d3"><i class="bx no"></i><svg class="st"><use href="#chk"/></svg><svg class="fold"><use href="#fold"/></svg>A9</span><span></span><span></span><span></span><span>00:00:00</span><span></span><span></span><span></span><span></span><span></span></div>
          <div class="row"><span class="n d2"><i class="bx plus"></i><svg class="st"><use href="#bulb"/></svg><svg class="fold"><use href="#fold"/></svg>B</span><span></span><span></span><span></span><span>00:00:00</span><span></span><span></span><span></span><span></span><span></span></div>
          <div class="row"><span class="n d2"><i class="bx plus"></i><svg class="st"><use href="#bulb"/></svg><svg class="fold"><use href="#fold"/></svg>C</span><span></span><span></span><span></span><span>00:00:00</span><span></span><span></span><span></span><span></span><span></span></div>
          <div class="row"><span class="n d2"><i class="bx plus"></i><svg class="st"><use href="#bulb"/></svg><svg class="fold"><use href="#fold"/></svg>D</span><span></span><span></span><span></span><span>00:00:00</span><span></span><span></span><span></span><span></span><span></span></div>
          <div class="row"><span class="n d2"><i class="bx plus"></i><svg class="st"><use href="#bulb"/></svg><svg class="fold"><use href="#fold"/></svg>E</span><span></span><span></span><span></span><span>00:00:00</span><span></span><span></span><span></span><span></span><span></span></div>
          <div class="row"><span class="n d2"><i class="bx plus"></i><svg class="st"><use href="#bulb"/></svg><svg class="fold"><use href="#fold"/></svg>F</span><span></span><span></span><span></span><span>00:00:00</span><span></span><span></span><span></span><span></span><span></span></div>
          <div class="row"><span class="n d2"><i class="bx plus"></i><svg class="st"><use href="#bulb"/></svg><svg class="fold"><use href="#fold"/></svg>G</span><span></span><span></span><span></span><span>00:00:00</span><span></span><span></span><span></span><span></span><span></span></div>
          <div class="row"><span class="n d2"><i class="bx plus"></i><svg class="st"><use href="#bulb"/></svg><svg class="fold"><use href="#fold"/></svg>H</span><span></span><span></span><span></span><span>00:00:00</span><span></span><span></span><span></span><span></span><span></span></div>
          <div class="row"><span class="n"></span><span></span><span></span><span></span><span></span><span></span><span></span><span></span><span></span><span></span></div>
          <div class="row"><span class="n"></span><span></span><span></span><span></span><span></span><span></span><span></span><span></span><span></span><span></span></div>
          <div class="row"><span class="n"></span><span></span><span></span><span></span><span></span><span></span><span></span><span></span><span></span><span></span></div>
          <div class="row"><span class="n"></span><span></span><span></span><span></span><span></span><span></span><span></span><span></span><span></span><span></span></div>
          <div class="row"><span class="n"></span><span></span><span></span><span></span><span></span><span></span><span></span><span></span><span></span><span></span></div>
          <div class="row"><span class="n"></span><span></span><span></span><span></span><span></span><span></span><span></span><span></span><span></span><span></span></div>
          <div class="row"><span class="n"></span><span></span><span></span><span></span><span></span><span></span><span></span><span></span><span></span><span></span></div>
          <div class="row"><span class="n"></span><span></span><span></span><span></span><span></span><span></span><span></span><span></span><span></span><span></span></div>
          <div class="row"><span class="n"></span><span></span><span></span><span></span><span></span><span></span><span></span><span></span><span></span><span></span></div>
          <div class="row"><span class="n"></span><span></span><span></span><span></span><span></span><span></span><span></span><span></span><span></span><span></span></div>
          <svg class="guides" viewBox="19 205 201 706">
            <path d="M29.500 235v14M29.500 235H40M36 255h4M48.500 265v450M55 275h4M67.500 285v290M74 295h4M86.500 305v10H97M74 335h4M86.500 345v30M86.500 355H97M86.500 375H97M86.500 335v10H97M74 415h4M86.500 425v10H97M74 455h4M86.500 465v10H97M67.500 495H79M67.500 515H79M67.500 535H79M67.500 555H79M67.500 575H79M55 595h4M55 615h4M55 635h4M55 655h4M55 675h4M55 695h4M55 715h4"/>
          </svg>
        </div>
      </div>
      <div class="splitter"></div>
      <div class="section"><span>相关性</span><svg class="chev" viewBox="0 0 10 9"><path d="M1 0l4 8 4-8" fill="none" stroke="#1b7898" stroke-width="1.600"/></svg></div>
      <div class="section"><span>细节</span><svg class="chev" viewBox="0 0 10 9"><path d="M1 0l4 8 4-8" fill="none" stroke="#1b7898" stroke-width="1.600"/></svg></div>
    </div>

    <div class="viewport">
      <svg class="scene" viewBox="703 154 911 818">
        <rect x="703" y="154" width="911" height="818" fill="url(#gview)"/>
        <use href="#disk" x="1031" y="406" width="144" height="118"/>
        <use href="#disk" x="1053" y="542" width="144" height="118"/>
        <use href="#disk" x="1237" y="536" width="144" height="118"/>
        <g class="triad">
          <path d="M1064 653 1052 578" stroke="#3fa83f" stroke-width="2.500"/>
          <path d="M1064 653 1070 585" stroke="#1038a8" stroke-width="3"/>
          <path d="M1064 654 1162 651" stroke="#d83030" stroke-width="1.500"/>
          <path d="M1052 572l-3 10h6z" fill="#3fa83f"/><path d="M1071 583l-4 12h8z" fill="#1038a8"/>
          <path d="M1167 651l-11-4v8z" fill="#d83030"/><path d="M1100 653l12-3v6z" fill="#d83030"/>
          <rect x="1058" y="630" width="8" height="10" fill="#c01818"/><rect x="1062" y="633" width="8" height="6" fill="#a01010"/>
          <text class="tb" x="1052" y="584">ZM</text><text class="tg" x="1058" y="571">YM</text>
          <text class="tb" x="1050" y="618">ZC</text><text class="tg" x="1066" y="610">YC</text>
          <text class="tr" x="1105" y="649">XC</text><text class="tr" x="1152" y="646">XM</text>
        </g>
        <g>
          <path d="M772 867h21l3 12-2 29h-25z" fill="#b4b4b4"/>
          <path d="M767 906 764 868" stroke="#3fa83f" stroke-width="1.300"/>
          <path d="M767 906 770 872" stroke="#1038a8" stroke-width="3"/>
          <path d="M767 905h42" stroke="#d83030" stroke-width="1.300"/><path d="M811 905l-9-3v6z" fill="#d83030"/>
          <circle cx="767" cy="905" r="4.500" fill="#e8e8e8"/>
          <text class="tg" x="760" y="875">Y</text><text class="tb" x="769" y="875">Z</text><text class="tr" x="813" y="910">X</text>
        </g>
      </svg>
    </div>
  </main>

  <footer class="status">
    <svg class="corner" viewBox="0 0 16 8"><path d="M0 6a8 8 0 0 1 15 2" fill="none" stroke="#5a8ca0"/></svg>
    <strong>全部 1</strong>
    <svg class="snap" viewBox="0 0 16 16"><path d="M1 4V1h3M12 1h3v3M15 12v3h-3M4 15H1v-3" fill="none" stroke="#888"/><rect x="3.500" y="3.500" width="9" height="9" fill="#eee" stroke="#555"/><rect x="5" y="6" width="6" height="5" fill="#6a98d8"/></svg>
  </footer>

  <svg class="wm" viewBox="1325 890 270 95">
    <path d="M1367 897 1403 918 1367 938z" fill="#3d8cb1"/>
    <path d="M1403 918V958L1367 938z" fill="#3a8ab0"/>
    <path d="M1403 958 1382 972 1367 972V938z" fill="#2a80ae"/>
    <path d="M1367 972 1352 972 1331 958 1367 938z" fill="#5a95b5"/>
    <path d="M1331 958V918l36 20z" fill="#6d9db8"/>
    <path d="M1331 918 1367 897v41z" fill="#8ba7b7"/>
    <path d="M1352 972h30l-15 6z" fill="#7fcdf8"/>
    <path d="M1343 915c15-6 30-4 41 6M1401 925c3 15-2 30-13 40M1386 960c-14 7-30 6-41-3M1336 953c-5-15-2-31 8-42" fill="none" stroke="#565759" stroke-width=".8"/>
    <path d="M1367 914 1388 926v24l-21 12-21-12v-24z" fill="#565759"/>
    <path d="M1367 922 1381 930v16l-14 8-14-8v-16z" fill="#6f9cb9"/>
    <path d="M1367 938l14-8v16l-14 8z" fill="#2f7fa8"/>
    <path d="M1353 930l14-8 14 8-14 8z" fill="#7ba7bf"/>
    <text class="wm-a" x="1411" y="947" textLength="177" lengthAdjust="spacing">3D世界网</text>
    <text class="wm-b" x="1413" y="965" textLength="172" lengthAdjust="spacing">WWW.3DSJW.COM</text>
  </svg>

  <div class="dialog" role="dialog">
    <div class="dlg-title">Error</div>
    <div class="dlg-body">
      <svg class="dlg-icon" viewBox="0 0 32 32"><circle cx="16" cy="16" r="15" fill="url(#gerr)" stroke="#b8b8b8" stroke-width="1.500"/><path d="M10 10l12 12M22 10 10 22" stroke="#e8e8e8" stroke-width="4.500"/></svg>
      <div class="dlg-text">
        <p>未能加载图像 - 详细信息请参见日志文件</p>
        <p>文件名：D:\Kasa\64bit\application\Prog_Edit.dll</p>
        <p>函数名：ufusr</p>
      </div>
    </div>
    <div class="dlg-foot"><button class="dlg-btn"><span>确定(<u>O</u>)</span></button></div>
  </div>
</div>
</body>
</html>
```

FILE: styles.css
```css
* { box-sizing: border-box; }
html, body { margin: 0; padding: 0; background: #fff; }
body { font-family: "Open Sans", "Noto Sans CJK SC", sans-serif; font-size: 12px; color: #333; }
svg { display: block; flex: none; }
.defs { position: absolute; width: 0; height: 0; }
.app { position: relative; width: 1614px; height: 992px; overflow: hidden; display: flex; flex-direction: column; }

.caret { display: block; flex: none; width: 0; height: 0; border-left: 3.5px solid transparent; border-right: 3.5px solid transparent; border-top: 4px solid #222; justify-self: center; align-self: center; }

/* title bar */
.titlebar { flex: none; height: 28px; background: #dcdcdc; display: flex; align-items: stretch; }
.tab-file { width: 61px; background: #56a0bc; color: #fff; font-size: 13px; line-height: 28px; white-space: nowrap; }
.tab-home { width: 53px; margin-left: 1px; background: #fff; color: #1b7898; font-size: 13px; line-height: 28px; text-align: center; border-top: 1px solid #c8c8c8; }
.tab-tool { margin-left: 13px; font-size: 13px; line-height: 28px; color: #333; letter-spacing: .2px; }
.title-right { margin-left: auto; display: flex; align-items: center; padding-right: 10px; }
.search { width: 125px; height: 20px; background: #fff; border: 1px solid #a8a8a8; display: flex; align-items: center; justify-content: space-between; padding: 0 1px; color: #aaa; font-size: 11px; }
.i16 { width: 16px; height: 16px; }
.ml-a { margin-left: 11px; }
.ml-b { margin-left: 11px; }
.ml-c { margin-left: 9px; }
.ml-d { margin-left: 10px; }
.help { font: bold 11px "Liberation Sans", sans-serif; fill: #fff; text-anchor: middle; }
.tut { margin-left: 4px; color: #222; font-size: 11px; }
.minus { width: 7px; height: 2px; background: #222; margin: 12px 0 0 9px; }

/* ribbon */
.ribbon { flex: none; height: 94px; background: #fff; border-bottom: 2px solid #dedede; display: flex; padding: 5px 0 2px; }
.grp { flex: none; height: 85px; border-right: 1px solid #dcdcdc; display: flex; flex-direction: column; position: relative; }
.g-foot { margin-top: auto; margin-bottom: -2px; height: 15px; display: flex; align-items: center; justify-content: space-between; color: #1b7898; font-size: 11px; padding: 0 7px 0 5px; line-height: 15px; }
.flabel { white-space: nowrap; }
.i24 { width: 24px; height: 24px; }
.i18 { width: 18px; height: 18px; justify-self: center; align-self: center; }
.i15 { width: 15px; height: 15px; justify-self: center; align-self: start; }
.i14 { width: 14px; height: 14px; }

.g0 { width: 40px; }
.g0-body { display: flex; align-items: center; height: 34px; padding-top: 8px; }
.cut { margin-left: -6px; width: 24px; }
.g0-body .caret { margin-left: 6px; }
.g0 .g-foot { padding: 0 8px 0 0; }
.g0-l { margin-left: -1px; }

.g1 { width: 188px; }
.g1-body { display: grid; grid-template-columns: 32px 32px 58px 58px; grid-template-rows: 33px 34px; padding-left: 5px; align-items: center; justify-items: center; }
.big1 { grid-column: 3; grid-row: 1 / 3; width: 44px; height: 46px; margin-top: 8px; }
.big2 { grid-column: 4; grid-row: 1 / 3; width: 48px; height: 44px; margin-top: 8px; }
.g1-body .i24:nth-child(5) { grid-column: 1; grid-row: 2; }
.g1-body .i24:nth-child(6) { grid-column: 2; grid-row: 2; }

.g2 { width: 124px; }
.g2-body { display: grid; grid-template-columns: 23px 12px 28px 8px 32px 8px; grid-template-rows: 19px 22px 22px; row-gap: 1px; padding-left: 9px; }
.g2-body > .caret:nth-child(2), .g2-body > .caret:nth-child(4) { align-self: start; margin-top: 4px; }
.hl { background: #cde3ea; border: 1px solid #b8d6e0; display: flex; align-items: center; justify-content: center; }
.g2-foot { padding: 0 8px 0 42px; }

.g3 { width: 44px; align-items: center; }
.big3 { width: 32px; height: 30px; }
.blabel { line-height: 16px; font-size: 11px; margin-top: 6px; color: #333; white-space: nowrap; }
.g3 .caret { margin-top: 4px; }

.g4 { width: 59px; }
.g4-body { display: grid; grid-template-columns: 24px 20px; grid-template-rows: 33px 34px; align-items: center; padding: 0 0 0 13px; }
.g4 .g-foot { padding: 0 8px 0 5px; }

.g5 { width: 334px; }
.g5-body { display: grid; grid-template-columns: 34px 34px 32px 12px 34px 10px 36px 8px 38px 28px 16px 38px; grid-template-rows: 33px 34px; padding-left: 7px; align-items: center; justify-items: center; }
.g5-body > :nth-child(4), .g5-body > :nth-child(6) { display: none; }
.g5-body > .i24:nth-child(5) { grid-column: 5; }
.g5-body > .i24:nth-child(7) { grid-column: 7; }
.g5-body > .caret:nth-child(8) { grid-column: 8; }
.g5-body > .i24:nth-child(9) { grid-column: 9; }
.g5-body > .i24:nth-child(10) { grid-column: 10; }
.g5-body > .caret:nth-child(11) { grid-column: 11; }
.big5 { grid-column: 12; grid-row: 1; width: 34px; height: 38px; }
.g5-body > :nth-child(13) { grid-column: 1; grid-row: 2; }
.dotinfo { position: relative; grid-column: 10; display: flex; justify-content: center; padding-top: 9px; width: 100%; }
.rdot { position: absolute; left: 0; top: 0; width: 5px; height: 5px; border-radius: 50%; background: #c83838; }
.stack { grid-column: 12; display: flex; flex-direction: column; align-items: center; gap: 5px; margin-top: -3px; }
.stack .blabel { margin-top: 0; }
.g5-foot { padding: 0 8px 0 136px; }

.g6 { width: 371px; border-right: 1px solid #dcdcdc; }
.g6-body { display: grid; grid-template-columns: repeat(11, 33px); grid-template-rows: 33px 34px; padding-left: 5px; align-items: center; justify-items: center; }
.shade { background: #c8c8c8; }

/* toolbar */
.toolbar { flex: none; height: 32px; background: #fff; border-bottom: 1px solid #9a9a9a; display: flex; align-items: center; }
.ti { width: 22px; height: 22px; }
.dim { opacity: .9; }
.cut2 { width: 8px; height: 14px; }
.m1 { margin-left: 1px; } .m2 { margin-left: 2px; } .m3 { margin-left: 3px; } .m4 { margin-left: 4px; } .m5 { margin-left: 5px; }
.m7 { margin-left: 7px; } .m8 { margin-left: 8px; } .m10 { margin-left: 10px; } .m11 { margin-left: 11px; }
.c14 { margin: 0 3.5px; }
.sep { display: block; width: 1px; height: 24px; background: #dcdcdc; flex: none; }
.sel { height: 20px; border: 1px solid #aaa; display: flex; align-items: center; justify-content: space-between; padding: 0 5px 0 2px; white-space: nowrap; color: #333; }
.s1 { width: 133px; }
.s2 { width: 140px; margin-left: 8px; }

/* main */
.main { flex: 1; min-height: 0; display: flex; }
.strip { width: 13px; flex: none; background: #dcdcdc; border-right: 1px solid #aaa; }
.strip-art { width: 12px; height: 818px; }
.panel { width: 690px; flex: none; padding-left: 5px; display: flex; flex-direction: column; border-right: 1px solid #777; background: #fff; }
.panel-head { height: 28px; display: flex; align-items: center; justify-content: space-between; padding: 2px 15px 0 4px; letter-spacing: .2px; }
.maxbox { display: block; width: 12px; height: 10px; border: 1px solid #222; border-top-width: 2px; }
.table { height: 730px; width: 675px; border: 1px solid #e2e2e2; border-width: 2px 2px 0 1px; display: flex; flex-direction: column; }
.row { display: grid; grid-template-columns: 201px 42px 33px 59px 67px 59px 55px 52px 54px 1fr; height: 20px; line-height: 19px; }
.row > span { display: block; padding-left: 4px; border-right: 1px solid #ececec; border-bottom: 1px solid #e8e8e8; white-space: nowrap; overflow: hidden; }
.row.head { height: 21px; background: #f0f0f0; line-height: 21px; }
.row.head > span { padding-left: 6px; border-right-color: #dcdcdc; border-bottom: 2px solid #dcdcdc; color: #333; }
.rows { position: relative; flex: 1; overflow: hidden; }
.rows > .row:nth-child(even) { background: #f8f8f8; }
.row > .n { display: flex; align-items: center; padding-left: 0; border-right: 1px solid #000; overflow: visible; position: relative; letter-spacing: .25px; }
.d0 { padding-left: 4px !important; }
.d1 { padding-left: 6px !important; }
.d2 { padding-left: 25px !important; }
.d3 { padding-left: 44px !important; }
.d4 { padding-left: 63px !important; }
.bx { display: block; flex: none; width: 10px; height: 10px; margin-right: 6px; border: 1px solid #d4d4d4; background: #fff; position: relative; }
.bx::before { content: ""; position: absolute; left: 1px; top: 3px; width: 6px; height: 2px; background: #222; transform: scaleY(.6); }
.bx.plus::after { content: ""; position: absolute; left: 3px; top: 1px; width: 2px; height: 6px; background: #222; transform: scaleX(.6); }
.bx.no { visibility: hidden; }
.st { width: 12px; height: 15px; margin-right: 3px; }
.fold { width: 14px; height: 15px; margin-right: 4px; }
.fold-n { margin-left: -1px; }
.tc { width: 8px; height: 14px; margin: 2px 0 0 4px; }
.ck { width: 14px; height: 13px; margin: 3px 0 0 1px; }
.on { background: #8ac1d1; border-right-color: #f4f4f4 !important; }
.sel-name { font-style: normal; background: #8ac1d1; display: block; height: 19px; flex: 1; margin-left: -3px; padding-left: 3px; }
.pur > span { color: #7a3cd6; }
.guides { position: absolute; left: 0; top: 0; width: 201px; height: 706px; pointer-events: none; }
.guides path { fill: none; stroke: #9a9a9a; stroke-dasharray: 1 2; }
.splitter { height: 6px; width: 675px; background: #d4d4d4; border: 1px solid #a8a8a8; flex: none; }
.section { flex: none; width: 675px; height: 24px; border-bottom: 2px solid #d2d2d2; display: flex; align-items: center; justify-content: space-between; color: #1b7898; font-size: 14px; padding: 2px 6px 0 7px; }
.chev { width: 10px; height: 9px; margin-top: -2px; }

.viewport { flex: 1; min-width: 0; position: relative; }
.scene { position: absolute; inset: 0; width: 100%; height: 100%; }
.scene text { font: 10px "Open Sans", sans-serif; }
.num text { font: 17px "Liberation Sans", sans-serif; fill: #34383a; stroke: #34383a; stroke-width: .4px; text-anchor: middle; dominant-baseline: central; }
.tb { fill: #2a6cf0; } .tg { fill: #3fa83f; } .tr { fill: #d83030; }

/* status */
.status { flex: none; height: 20px; background: #fff; border-top: 2px solid #b4b4b4; position: relative; display: flex; align-items: center; justify-content: space-between; padding: 0 9px 0 0; }
.status strong { position: absolute; left: 776px; font-size: 11px; color: #222; top: 1px; }
.corner { width: 16px; height: 8px; margin-top: 10px; }
.snap { width: 16px; height: 16px; }

/* watermark */
.wm { position: absolute; left: 1325px; top: 890px; width: 270px; height: 95px; overflow: visible; }
.wm-a { font: bold 40px "Liberation Sans", "Noto Sans CJK SC", sans-serif; fill: #a6a7a9; }
.wm-b { font: bold 13px "Liberation Sans", sans-serif; fill: #a6a7a9; }

/* dialog */
.dialog { position: absolute; left: 644px; top: 393px; width: 352px; height: 182px; background: #eeeeee; border: 1px solid #9c9c9c; border-top: 0; display: flex; flex-direction: column; }
.dlg-title { height: 28px; background: #54a0bb; color: #fff; font-size: 13px; line-height: 28px; margin: 0 -1px; padding-left: 9px; }
.dlg-body { display: flex; padding: 10px 0 0 14px; }
.dlg-icon { width: 32px; height: 32px; margin: -2px 14px 0 0; }
.dlg-text p { margin: 0 0 18px; line-height: 16px; color: #333; font-size: 12px; letter-spacing: .2px; white-space: nowrap; }
.dlg-foot { display: flex; justify-content: center; margin-top: 7px; }
.dlg-btn { width: 63px; height: 25px; background: #72afc6; border: 0; padding: 2px; font: inherit; color: #eaf6fa; }
.dlg-btn span { display: block; height: 100%; border: 1px dotted #111; line-height: 18px; }
```
